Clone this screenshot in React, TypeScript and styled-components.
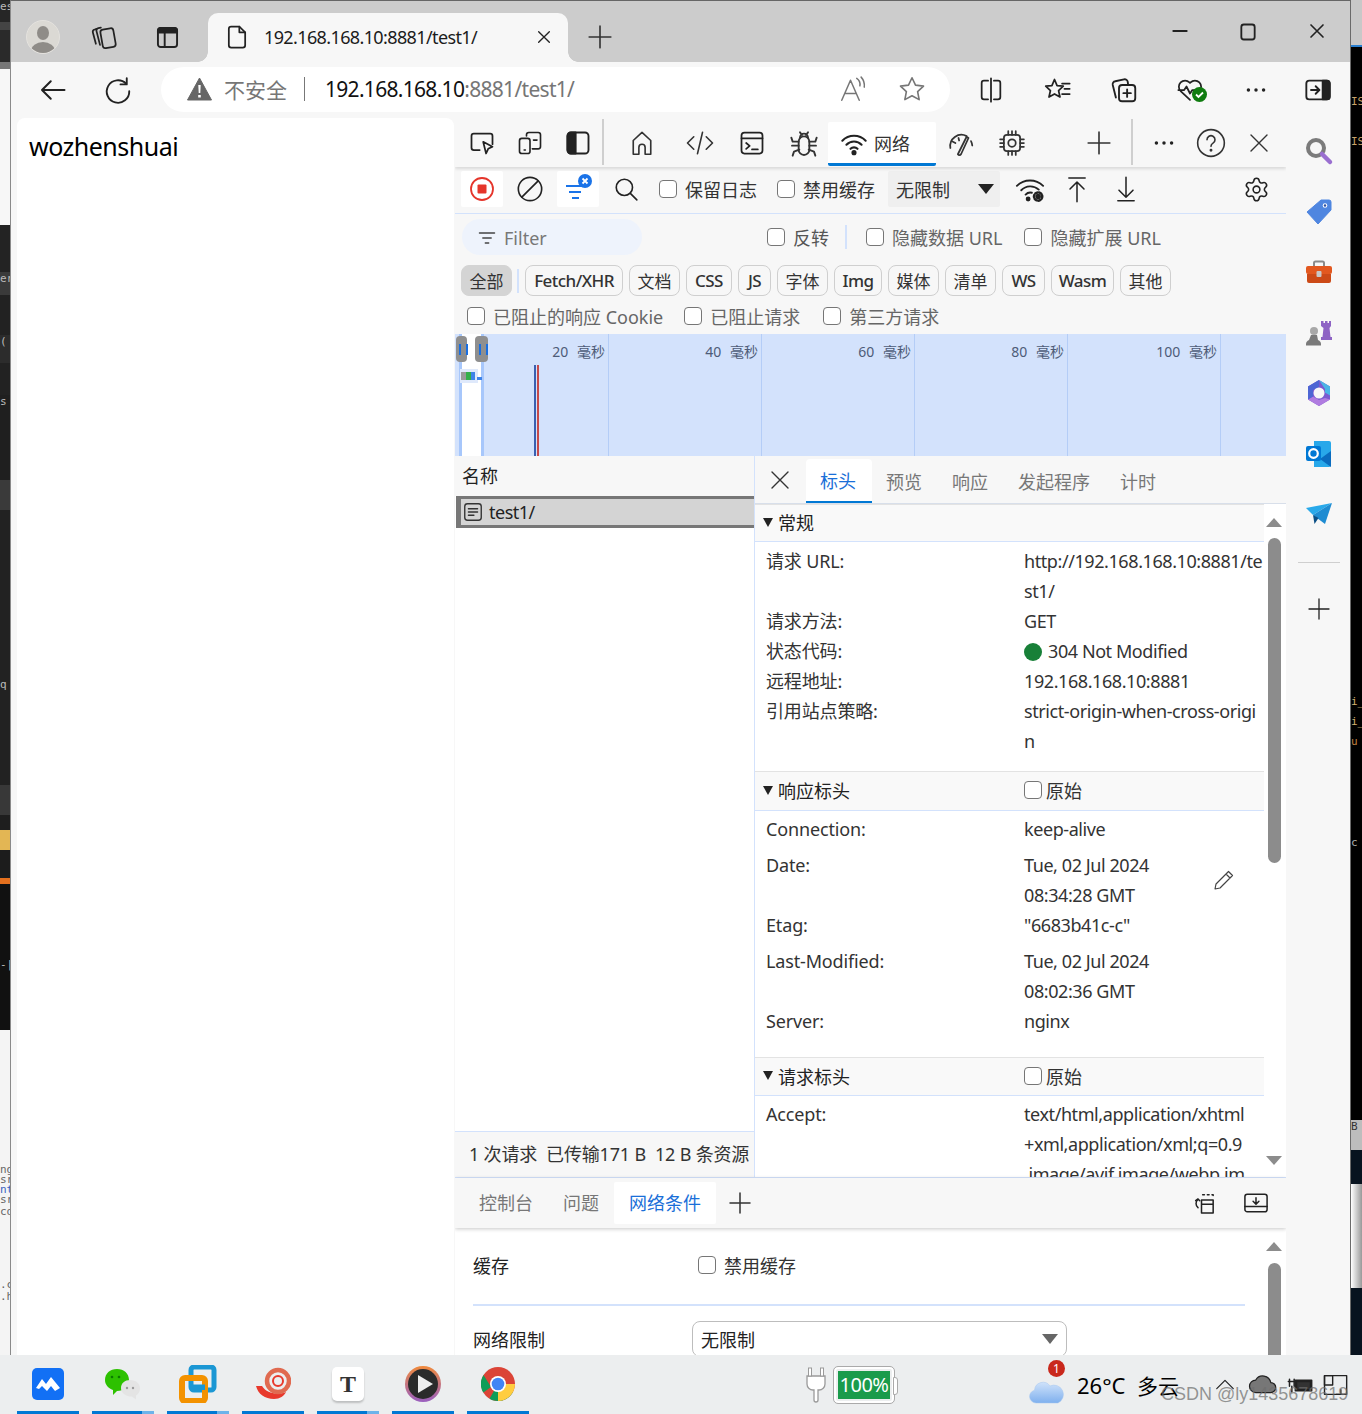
import React from 'react';
import styled, { createGlobalStyle } from 'styled-components';
import { Settings } from 'lucide-react';

const Global = createGlobalStyle`
  html, body { margin: 0; padding: 0; background: #fff; }
  body { font-family: "Noto Sans", "Noto Sans CJK SC", sans-serif; color: #222; }
  * { box-sizing: border-box; }
`;

const Page = styled.div`width: 1362px; height: 1414px; position: relative; overflow: hidden; display: flex; flex-direction: column;`;
const Desktop = styled.div`height: 1355px; display: flex;`;
const EdgeStrip = styled.div<{ $w: number }>`width: ${p => p.$w}px; flex: none; display: flex; flex-direction: column; overflow: hidden;`;
const Seg = styled.div<{ $h: number; $bg: string; $c?: string }>`
  height: ${p => p.$h}px; background: ${p => p.$bg}; color: ${p => p.$c || '#bbb'}; flex: none;
  font: 11px/${p => Math.min(p.$h, 14)}px "DejaVu Sans Mono", monospace; white-space: nowrap; overflow: hidden;
`;
const Window = styled.div`flex: 1; min-width: 0; display: flex; flex-direction: column; border-left: 1px solid #8a8a8a; border-right: 1px solid #6a6a6a; border-top: 1px solid #666; background: #f7f7f7;`;

const Ico = styled.svg<{ $s: number; $c: string; $w: number }>`
  width: ${p => p.$s}px; height: ${p => p.$s}px; fill: none; flex: none; display: block;
  stroke: ${p => p.$c}; stroke-width: ${p => p.$w}; stroke-linecap: round; stroke-linejoin: round;
`;
const I: React.FC<{ s?: number; c?: string; w?: number; children?: React.ReactNode }> = ({ s = 24, c = '#222', w = 1.5, children }) => (
  <Ico viewBox="0 0 24 24" $s={s} $c={c} $w={w}>{children}</Ico>
);

/* Slot: a box centring one icon in a toolbar row */
const Slot = styled.div<{ $w: number; $ml?: number; $top?: number }>`
  width: ${p => p.$w}px; margin-left: ${p => p.$ml || 0}px; flex: none; display: flex; align-items: center; justify-content: center;
  ${p => p.$top !== undefined ? `align-self: flex-start; margin-top: ${p.$top}px;` : ''}
`;

/* ---------- tab bar ---------- */
const TabBar = styled.div`height: 61px; background: #cccccc; display: flex; align-items: center; padding: 11px 0 0 14px; flex: none;`;
const Tab = styled.div`
  width: 360px; height: 49px; margin: 1px 0 0 23px; align-self: flex-start; background: #f7f7f7; border-radius: 10px 10px 0 0;
  display: flex; align-items: center; position: relative; padding-bottom: 1px;
  &::before, &::after { content: ""; position: absolute; bottom: 0; width: 10px; height: 10px; background: radial-gradient(circle at var(--cx) 0, #cccccc 9.5px, #f7f7f7 10px); }
  &::before { left: -10px; --cx: 0; }
  &::after { right: -10px; --cx: 10px; }
`;
const TabTitle = styled.span`font-size: 18px; margin-left: 13px; width: 272px; color: #1c1c1c; letter-spacing: -0.62px; white-space: nowrap;`;
const Avatar = styled.div`width: 34px; height: 34px; border-radius: 50%; background: #dbd9d4; position: relative; overflow: hidden; border: 1px solid #e4e2de;
  &::before { content: ""; position: absolute; left: 10px; top: 5px; width: 12px; height: 14px; border-radius: 50%; background: #8f8c88; }
  &::after { content: ""; position: absolute; left: 4px; top: 21px; width: 24px; height: 18px; border-radius: 50%; background: #8f8c88; }
`;

/* ---------- address toolbar ---------- */
const Toolbar = styled.div`height: 56px; display: flex; align-items: center; padding-left: 26px; flex: none; position: relative;`;
const Address = styled.div`width: 789px; height: 45px; margin: -2px 0 0 28px; background: #fff; border-radius: 23px; display: flex; align-items: center; padding: 0 23px 0 26px;`;
const Insecure = styled.span`font-size: 21px; color: #767676; margin-left: 12px;`;
const AddrSep = styled.span`width: 1px; height: 24px; background: #777; margin: 0 20px 0 17px;`;
const Host = styled.span`font-size: 21px; color: #111; letter-spacing: -0.7px;`;
const Rest = styled.span`font-size: 21px; color: #767676; letter-spacing: -0.7px; flex: 1;`;

/* ---------- content ---------- */
const Content = styled.div`flex: 1; min-height: 0; display: flex; padding-left: 6px;`;
const PagePane = styled.div`width: 437px; flex: none; background: #fff; border-radius: 8px 8px 0 0; padding: 8px 12px; font-size: 25px; line-height: 40px; color: #000; letter-spacing: -0.5px;`;
const Devtools = styled.div`width: 831px; margin-left: 1px; flex: none; display: flex; flex-direction: column; overflow: hidden;`;
const SideBar = styled.div`flex: 1; display: flex; flex-direction: column; align-items: center; padding: 3px 0 0 1px;`;
const SideItem = styled.div`height: 60.5px; width: 100%; display: flex; align-items: center; justify-content: center; flex: none;`;
const SideRule = styled.div`width: 42px; height: 1px; background: #cfcfcf; margin: 17px 0 34px;`;

const ActivityBar = styled.div`height: 49px; flex: none; display: flex; align-items: center; box-shadow: 0 2px 3px rgba(0,0,0,.12); position: relative;`;
const ActSep = styled.div<{ $ml: number }>`width: 2px; height: 46px; background: #cfcfcf; margin-left: ${p => p.$ml}px; margin-top: -2px;`;
const NetTab = styled.div`width: 108px; height: 44px; margin: 3px 0 0 9px; background: #fff; border-bottom: 3px solid #0078d4; border-radius: 2px; display: flex; align-items: center; padding-left: 12px; gap: 6px; font-size: 18px; color: #333;`;

const NetBar = styled.div`height: 47px; flex: none; display: flex; align-items: center; border-bottom: 1px solid #d3e2fc; padding: 0 0 2px 6px;`;
const ToolBtn = styled.div<{ $ml?: number; $white?: boolean }>`
  width: 42px; height: 36px; margin-left: ${p => p.$ml || 0}px; border-radius: 2px; background: ${p => p.$white ? '#fff' : 'transparent'};
  display: flex; align-items: center; justify-content: center; flex: none; position: relative;
`;
const Box = styled.span`width: 18px; height: 18px; border: 1.5px solid #767676; border-radius: 4px; background: #fff; flex: none;`;
const Check = styled.label<{ $ml?: number; $c?: string; $gap?: number }>`
  display: flex; align-items: center; gap: ${p => p.$gap ?? 8}px; font-size: 18px; color: ${p => p.$c || '#333'}; margin-left: ${p => p.$ml || 0}px; white-space: nowrap; flex: none;
`;
const NetSelect = styled.div`width: 112px; height: 36px; background: #efefef; margin-left: 13px; border-radius: 2px; display: flex; align-items: center; justify-content: space-between; padding: 0 6px 0 8px; font-size: 18px; color: #333;`;
const Tri = styled.span<{ $c?: string; $s?: number }>`width: 0; height: 0; border-left: ${p => p.$s || 8}px solid transparent; border-right: ${p => p.$s || 8}px solid transparent; border-top: ${p => (p.$s || 8) + 2}px solid ${p => p.$c || '#222'}; flex: none;`;

const FilterRow = styled.div`height: 46px; flex: none; display: flex; align-items: center; padding-left: 7px;`;
const FilterPill = styled.div`width: 180px; height: 36px; border-radius: 18px; background: #eef3fc; display: flex; align-items: center; padding: 2px 0 0 15px; gap: 7px; color: #777; font-size: 18px;`;
const VSep = styled.span<{ $ml: number; $h: number }>`width: 2px; height: ${p => p.$h}px; background: #d3e2fc; margin-left: ${p => p.$ml}px; flex: none;`;

const ChipRow = styled.div`height: 40px; flex: none; display: flex; align-items: center; gap: 6px; padding: 1px 0 0 6px;`;
const Chip = styled.div<{ $on?: boolean; $w: number; $bold?: boolean }>`
  height: 31px; width: ${p => p.$w}px; flex: none; justify-content: center; border-radius: 8px; border: 1px solid ${p => p.$on ? '#d4d4d4' : '#cfcfcf'}; background: ${p => p.$on ? '#d4d4d4' : 'transparent'};
  font-size: 17px; display: flex; align-items: center; color: #333; font-weight: ${p => p.$bold ? 500 : 400}; white-space: nowrap; letter-spacing: ${p => p.$bold ? '-0.55px' : '0'};
`;
const ChecksRow = styled.div`height: 34px; flex: none; display: flex; align-items: center; padding: 0 0 3px 12px;`;

const Overview = styled.div`height: 122px; flex: none; background: #d3e2fc; position: relative; display: grid; grid-template-columns: repeat(5, 153px); padding-left: 1px;`;
const TickCell = styled.div`border-right: 1px solid #b4cdf7; text-align: right; padding: 9px 3px 0 0; font-size: 14px; line-height: 18px; color: #4e5c78; word-spacing: 5px;`;
const SelWindow = styled.div`position: absolute; left: 4px; top: 0; width: 25px; bottom: 0; background: #fff; border-left: 3px solid #a7c7fb; border-right: 3px solid #a7c7fb;`;
const Handle = styled.div<{ $x: number; $w: number }>`
  position: absolute; left: ${p => p.$x}px; top: 2px; width: ${p => p.$w}px; height: 26px; background: #8f8f8f; border-radius: 4px;
  &::after { content: ""; position: absolute; left: ${p => Math.max(1, p.$w / 2 - 3)}px; top: 8px; width: 5px; height: 11px; border-left: 2px solid #1a6fe0; border-right: 2px solid #1a6fe0; }
`;
const WaterBar = styled.div<{ $x: number; $w: number; $c: string; $y?: number; $h?: number }>`position: absolute; left: ${p => p.$x}px; top: ${p => p.$y ?? 38}px; width: ${p => p.$w}px; height: ${p => p.$h ?? 8}px; background: ${p => p.$c};`;
const Marker = styled.div<{ $x: number; $c: string }>`position: absolute; left: ${p => p.$x}px; top: 31px; bottom: 0; width: 2px; background: ${p => p.$c};`;

const Split = styled.div`flex: 1; min-height: 0; display: flex; border-bottom: 1px solid #d3e2fc;`;
const ListPane = styled.div`width: 300px; flex: none; background: #fff; border-right: 1px solid #d3e2fc; display: flex; flex-direction: column;`;
const ListHead = styled.div`height: 40px; background: #f7f7f7; display: flex; align-items: center; padding: 0 0 2px 7px; font-size: 18px; color: #222;`;
const ListRow = styled.div`height: 32px; margin-left: 1px; background: #d4d4d4; border: solid #777; border-width: 3px 0 3px 5px; display: flex; align-items: center; gap: 5px; padding: 0 0 1px 1px; font-size: 18px; color: #222; letter-spacing: -0.5px;`;
const ListFill = styled.div`flex: 1;`;
const StatusBar = styled.div`height: 46px; background: #f7f7f7; border-top: 1px solid #d3e2fc; display: flex; align-items: center; padding: 0 0 3px 14px; font-size: 18px; color: #333; white-space: pre; letter-spacing: -0.18px; overflow: hidden;`;

const Details = styled.div`flex: 1; min-width: 0; display: flex; flex-direction: column; background: #fff;`;
const DetailTabs = styled.div`height: 48px; flex: none; background: #f7f7f7; border-bottom: 1px solid #d8dfea; display: flex; align-items: center; padding-left: 13px;`;
const DetailTab = styled.div<{ $on?: boolean; $ml?: number }>`
  height: 44px; margin-left: ${p => p.$ml || 0}px; padding: 0 ${p => p.$on ? '16px 0 14px' : '0'}; font-size: 18px; display: flex; align-items: center; align-self: flex-end;
  color: ${p => p.$on ? '#1a6fd8' : '#777'}; background: ${p => p.$on ? '#fff' : 'transparent'}; border-bottom: ${p => p.$on ? '2px solid #0078d4' : '0'}; border-radius: 4px 4px 0 0;
`;
const DetailBody = styled.div`flex: 1; min-height: 0; display: flex; overflow: hidden;`;
const Sections = styled.div`width: 509px; flex: none;`;
const SecHead = styled.div<{ $h: number }>`height: ${p => p.$h}px; display: flex; align-items: center; background: #f9f9f9; border-bottom: 1px solid #d3e2fc; border-top: 1px solid #e3e3e3; padding: 0 0 2px 8px; font-size: 18px; color: #222;`;
const SecTitle = styled.span`margin-left: 5px; width: 246px;`;
const HeadTri = styled(Tri)`border-left-width: 5px; border-right-width: 5px; border-top-width: 9px;`;
const SecRows = styled.div<{ $pt: number; $pb: number }>`padding: ${p => p.$pt}px 0 ${p => p.$pb}px 11px; position: relative;`;
const Row = styled.div<{ $mt?: number }>`display: grid; grid-template-columns: 258px 1fr; margin-top: ${p => p.$mt || 0}px; font-size: 18px; line-height: 30px; color: #333; white-space: nowrap;`;
const RowLabel = styled.span`letter-spacing: -0.15px;`;
const RowValue = styled.span`letter-spacing: -0.42px;`;
const StatusDot = styled.span`display: inline-block; width: 18px; height: 18px; border-radius: 50%; background: #188038; vertical-align: -3px; margin-right: 6px;`;
const Pencil = styled.div`position: absolute; right: 28px; top: 57px;`;

const Scroll = styled.div`flex: 1; display: flex; flex-direction: column; align-items: center; position: relative; background: #fff;`;
const ArrUp = styled.span`width: 0; height: 0; border-left: 8px solid transparent; border-right: 8px solid transparent; border-bottom: 9px solid #8c8c8c; margin-top: 14px; margin-left: -2px; flex: none;`;
const ArrDown = styled.span`width: 0; height: 0; border-left: 8px solid transparent; border-right: 8px solid transparent; border-top: 9px solid #8c8c8c; margin-left: -2px; flex: none;`;
const Thumb = styled.div<{ $h: number; $mt: number; $mb?: number }>`width: 13px; height: ${p => p.$h}px; border-radius: 7px; background: #8c8c8c; margin-top: ${p => p.$mt}px; margin-bottom: ${p => p.$mb || 0}px; margin-left: -2px; flex: none;`;

const DrawerTabs = styled.div`height: 50px; flex: none; background: #f7f7f7; display: flex; align-items: center; padding-left: 24px; box-shadow: 0 1px 4px rgba(0,0,0,.22); position: relative; z-index: 1;`;
const DrawerTab = styled.div<{ $on?: boolean; $ml?: number }>`
  margin-left: ${p => p.$ml || 0}px; font-size: 18px; color: ${p => p.$on ? '#1a6fd8' : '#777'}; height: 42px; display: flex; align-items: center;
  padding: 0 ${p => p.$on ? 15 : 0}px 2px; background: ${p => p.$on ? '#fff' : 'transparent'}; border-radius: 2px;
`;
const DrawerBody = styled.div`height: 127px; flex: none; display: flex; background: #fff; overflow: hidden;`;
const DrawerMain = styled.div`width: 809px; flex: none; padding: 0 19px 0 18px;`;
const CondRow = styled.div<{ $h: number; $pb?: number }>`height: ${p => p.$h}px; padding-bottom: ${p => p.$pb || 0}px; display: grid; grid-template-columns: 219px 1fr; align-items: center; font-size: 18px; color: #222;`;
const CondRule = styled.div`height: 2px; background: #d3e2fc; margin-bottom: 14px;`;
const CondSelect = styled.div`width: 375px; height: 36px; border: 1px solid #bdbdbd; border-radius: 8px; display: flex; align-items: center; justify-content: space-between; padding: 0 8px;`;

/* ---------- taskbar ---------- */
const Taskbar = styled.div`height: 59px; flex: none; background: #eceeef; display: flex; padding-left: 17px; position: relative;`;
const TaskItem = styled.div<{ $split?: boolean }>`
  width: 62px; margin-right: 13px; display: flex; align-items: center; justify-content: center; padding-bottom: 2px; position: relative;
  &::after { content: ""; position: absolute; left: 0; right: 0; bottom: 0; height: 3px;
    background: ${p => p.$split ? 'linear-gradient(90deg, #0078d4 80%, #6db3ea 80%)' : '#0078d4'}; }
`;
const TTile = styled.div`width: 32px; height: 34px; border-radius: 5px; background: #fff; box-shadow: 0 2px 2px rgba(0,0,0,.2); display: flex; align-items: center; justify-content: center; font: 700 24px/1 "Liberation Serif", serif; color: #333;`;
const Tray = styled.div`position: absolute; left: 790px; right: 0; top: 0; bottom: 0; display: flex; align-items: center; overflow: hidden;`;
const Battery = styled.div`
  width: 60px; height: 36px; margin-left: 7px; border: 2px solid #fff; outline: 1px solid #aaa; border-radius: 4px; padding: 2px; flex: none; position: relative;
  &::after { content: ""; position: absolute; right: -6px; top: 8px; width: 3px; height: 16px; background: #fff; border: 1px solid #aaa; border-radius: 0 3px 3px 0; }
`;
const BatteryFill = styled.div`height: 100%; background: #1a9b4b; color: #fff; font-size: 20px; line-height: 27px; text-align: center; letter-spacing: -.5px;`;
const WeatherIcon = styled.div`position: relative; margin: 3px 0 0 135px; flex: none; height: 36px; width: 36px; display: flex; align-items: flex-end;`;
const Badge = styled.div`position: absolute; left: 19px; top: -8px; width: 17px; height: 17px; border-radius: 50%; background: #c9281c; color: #fff; font-size: 12px; line-height: 17px; text-align: center;`;
const Temp = styled.span`font-size: 22px; color: #000; margin-left: 12px; white-space: nowrap; width: 60px; flex: none;`;
const Cloudy = styled.span`font-size: 21px; color: #000; white-space: nowrap; width: 66px; flex: none;`;
const TrayEnd = styled.div`width: 6px; height: 12px; border: 1px solid #222; margin-left: 24px; flex: none;`;
const Watermark = styled.div`position: absolute; left: 1161px; top: 27px; font: 18px/24px "Liberation Sans", sans-serif; color: rgba(110,110,110,.72); white-space: nowrap;`;
const HeartWrap = styled.div`position: relative;`;
const HeartBadge = styled.div`position: absolute; right: -3px; bottom: -3px;`;

/* ---------- icons ---------- */
const X = ({ s = 20, w = 1.6, c = '#222' }) => <I s={s} w={w} c={c}><path d="M4 4l16 16M20 4L4 20" /></I>;
const Plus = ({ s = 26, w = 1.5, c = '#333' }) => <I s={s} w={w} c={c}><path d="M12 2v20M2 12h20" /></I>;
const Wifi = ({ s = 28 }) => <I s={s} w={1.8}><path d="M2 10a14 14 0 0 1 20 0M5.500 13.500a9 9 0 0 1 13 0M9 17a4.200 4.200 0 0 1 6 0" /><circle cx="12" cy="20.300" r="1.300" fill="#222" /></I>;
const Doc = () => <I s={28} w={1.5}><path d="M7 3h7l5 5v11a2 2 0 0 1-2 2H7a2 2 0 0 1-2-2V5a2 2 0 0 1 2-2z" /><path d="M14 3v5h5" /></I>;
const Copies = () => <I s={30} w={1.4}><rect x="10" y="5.500" width="10.500" height="15" rx="2.200" transform="rotate(-10 15 13)" /><path d="M9.500 4.500l-2 .4a2 2 0 0 0-1.500 2.400l2.800 11M6 5.500l-1.500.5a2 2 0 0 0-1.400 2.400l2.400 9" /></I>;
const VTabs = () => <I s={27} w={1.7}><rect x="3.500" y="3.500" width="17" height="17" rx="2.500" /><path d="M3.500 7.500V6a2.500 2.500 0 0 1 2.500-2.500h12a2.500 2.500 0 0 1 2.500 2.500v1.500z" fill="#222" /><path d="M9.500 7.500v13" /></I>;
const Dot3 = ({ s = 26 }) => <I s={s}><circle cx="5" cy="12" r="1.600" fill="#222" stroke="none" /><circle cx="12" cy="12" r="1.600" fill="#222" stroke="none" /><circle cx="19" cy="12" r="1.600" fill="#222" stroke="none" /></I>;

export default function App() {
  return (
    <Page>
      <Global />
      <Desktop>
        <EdgeStrip $w={10}>
          <Seg $h={22} $bg="#262626">es</Seg>
          <Seg $h={8} $bg="#444" />
          <Seg $h={32} $bg="#2a2a2a" />
          <Seg $h={7} $bg="#777" />
          <Seg $h={156} $bg="#f7f7f7" />
          <Seg $h={47} $bg="#232323" />
          <Seg $h={23} $bg="#3a3a3a">er</Seg>
          <Seg $h={40} $bg="#222" />
          <Seg $h={28} $bg="#2c2c2c">(</Seg>
          <Seg $h={32} $bg="#222" />
          <Seg $h={85} $bg="#1f1f1f">s</Seg>
          <Seg $h={30} $bg="#3a3a3a" />
          <Seg $h={168} $bg="#222" />
          <Seg $h={107} $bg="#222">q</Seg>
          <Seg $h={30} $bg="#383838" />
          <Seg $h={15} $bg="#1e1e1e" />
          <Seg $h={20} $bg="#e3b654" />
          <Seg $h={28} $bg="#1c1c1c" />
          <Seg $h={6} $bg="#e4701e" />
          <Seg $h={74} $bg="#111" />
          <Seg $h={72} $bg="#111">-|</Seg>
          <Seg $h={135} $bg="#f4f4f4" />
          <Seg $h={10} $bg="#f4f4f4" $c="#666">ng:</Seg>
          <Seg $h={10} $bg="#f4f4f4" $c="#666">sr</Seg>
          <Seg $h={10} $bg="#f4f4f4" $c="#3a5fc0">nt</Seg>
          <Seg $h={10} $bg="#f4f4f4" $c="#666">sr</Seg>
          <Seg $h={75} $bg="#f4f4f4" $c="#666">co</Seg>
          <Seg $h={10} $bg="#f4f4f4" $c="#666">.c</Seg>
          <Seg $h={65} $bg="#f4f4f4" $c="#666">.h</Seg>
        </EdgeStrip>
        <Window>
          <TabBar>
            <Slot $w={36}><Avatar /></Slot>
            <Slot $w={36} $ml={25}><Copies /></Slot>
            <Slot $w={36} $ml={27}><VTabs /></Slot>
            <Tab>
              <Slot $w={28} $ml={15}><Doc /></Slot>
              <TabTitle>192.168.168.10:8881/test1/</TabTitle>
              <X s={16} w={2} />
            </Tab>
            <Slot $w={26} $ml={19}><Plus /></Slot>
            <Slot $w={22} $ml={556} $top={10}><I s={18} w={2.400}><path d="M3 12h18" /></I></Slot>
            <Slot $w={22} $ml={46} $top={10}><I s={20} w={2.200}><rect x="4" y="3" width="16" height="18" rx="3" /></I></Slot>
            <Slot $w={22} $ml={47} $top={10}><X s={18} w={2.200} /></Slot>
          </TabBar>
          <Toolbar>
            <Slot $w={30}><I s={30} w={1.600}><path d="M4 12h18M11 5l-7 7 7 7" /></I></Slot>
            <Slot $w={30} $ml={36}><I s={30} w={1.500}><path d="M18.500 7A9 9 0 1 0 21 13" /><path d="M19 2.500V7.500H14" /></I></Slot>
            <Address>
              <svg width="25" height="24" viewBox="0 0 25 24"><path d="M12.500 1L24.500 23H.5z" fill="#666" stroke="#666" strokeLinejoin="round" /><path d="M11.300 8h2.400l-.4 8h-1.600zM11.200 18h2.600v2.600h-2.600z" fill="#fff" /></svg>
              <Insecure>不安全</Insecure>
              <AddrSep />
              <Host>192.168.168.10</Host>
              <Rest>:8881/test1/</Rest>
              <Slot $w={30}>
                <I s={30} c="#767676" w={1.200}><path d="M3 21L10 5l7 16M5.500 15.500h9M15 3.500a6 6 0 0 1 2.500 6M18.500 2.500a10 10 0 0 1 2.500 8" /></I>
              </Slot>
              <Slot $w={30} $ml={29}>
                <I s={30} c="#767676" w={1.300}><path d="M12 3l2.800 5.900 6.400.8-4.700 4.400 1.200 6.400L12 17.400l-5.700 3.100 1.200-6.400L2.800 9.700l6.400-.8z" /></I>
              </Slot>
            </Address>
            <Slot $w={30} $ml={26}><I s={28} w={1.500}><path d="M9.500 4H6a2 2 0 0 0-2 2v12a2 2 0 0 0 2 2h3.500M14.500 4H18a2 2 0 0 1 2 2v12a2 2 0 0 1-2 2h-3.500M12 2v20" /></I></Slot>
            <Slot $w={30} $ml={37}><I s={28} w={1.500}><path d="M9 3l2.200 5.200 5.300.5-4 3.800 1.200 5.500L9 15.400 4.300 18l1.200-5.500-4-3.800 5.300-.5zM15.500 6.500H22M17.500 11H22M15.500 15.500H22" /></I></Slot>
            <Slot $w={30} $ml={36}><I s={30} w={1.500}><rect x="8" y="8" width="13" height="13" rx="2.500" /><path d="M14.500 11.500v6M11.500 14.500h6M5.500 18L3 8a2.500 2.500 0 0 1 2-3l7-1.500a2.500 2.500 0 0 1 3 2L15.300 8" /></I></Slot>
            <Slot $w={30} $ml={36}>
              <HeartWrap>
                <I s={28} w={1.500}><path d="M12 20.500L4 13a5.300 5.300 0 0 1 0-7.500 5.300 5.300 0 0 1 7.500 0l.5.500.5-.5a5.300 5.300 0 0 1 7.500 0 5.300 5.300 0 0 1 0 7.500M2 12h5l2-3 3 6 2-3h3" /></I>
                <HeartBadge><svg width="15" height="15" viewBox="0 0 15 15"><circle cx="7.500" cy="7.500" r="7.500" fill="#107c10" /><path d="M4 7.500l2.500 2.500 4.500-4.500" fill="none" stroke="#fff" strokeWidth="1.800" /></svg></HeartBadge>
              </HeartWrap>
            </Slot>
            <Slot $w={30} $ml={36}><Dot3 /></Slot>
            <Slot $w={30} $ml={32}>
              <I s={28} w={1.600}><rect x="2" y="4" width="20" height="16" rx="2.500" /><path d="M16 4h3.500A2.500 2.500 0 0 1 22 6.500v11a2.500 2.500 0 0 1-2.500 2.500H16z" fill="#222" /><path d="M6 12h7M10 8.800l3.200 3.200-3.200 3.200" /></I>
            </Slot>
          </Toolbar>
          <Content>
            <PagePane>wozhenshuai</PagePane>
            <Devtools>
              <ActivityBar>
                <Slot $w={30} $ml={12}><I s={28} w={1.500}><path d="M10 18H5a2 2 0 0 1-2-2V6a2 2 0 0 1 2-2h14a2 2 0 0 1 2 2v7" /><path d="M13 11l2.500 10 1.800-4 3.700-1.800z" /></I></Slot>
                <Slot $w={30} $ml={18}><I s={28} w={1.400}><path d="M9 6V5a2 2 0 0 1 2-2h8a2 2 0 0 1 2 2v10a2 2 0 0 1-2 2h-5" /><rect x="3" y="8" width="9" height="13" rx="2" /><path d="M7 18h1M15 9.500h3" /></I></Slot>
                <Slot $w={30} $ml={18}><I s={28} w={1.600}><rect x="3" y="3" width="18" height="18" rx="3" /><path d="M6 3h4v18H6a3 3 0 0 1-3-3V6a3 3 0 0 1 3-3z" fill="#222" /></I></Slot>
                <ActSep $ml={9} />
                <Slot $w={30} $ml={23}><I s={30} c="#333" w={1.300}><path d="M5 21V10l7-6.500L19 10v11h-4.500v-5.500a2.500 2.500 0 0 0-5 0V21z" /></I></Slot>
                <Slot $w={30} $ml={28}><I s={30} c="#333" w={1.300}><path d="M7 7l-5 5 5 5M17 7l5 5-5 5M14 3.500l-4 17" /></I></Slot>
                <Slot $w={30} $ml={22}><I s={28} c="#222" w={1.500}><rect x="3" y="3" width="18" height="18" rx="2.500" /><path d="M3 8h18M7 12l3 2.500L7 17M12 17.500h5" /></I></Slot>
                <Slot $w={30} $ml={22}><I s={32} c="#333" w={1.400}><rect x="8" y="7" width="8" height="14" rx="4" /><path d="M9 8a3 3 0 0 1 6 0M9 4l1.500 2M15 4l-1.500 2M8 11H3.500L2.500 8M16 11h4.500l1-3M8 14H3M16 14h5M8.500 17l-4 1.500-1 3M15.500 17l4 1.500 1 3" /></I></Slot>
                <NetTab><Wifi /><span>网络</span></NetTab>
                <Slot $w={30} $ml={10}><I s={30} c="#333" w={1.400}><path d="M3.500 16a9 9 0 0 1 13-9.500M21 14a9 9 0 0 0-1-3.500M5.500 11l2 1M10 8l.5 2M9.500 21l7-14 1.500 1-6 13a1.500 1.500 0 0 1-2.500 0z" /></I></Slot>
                <Slot $w={30} $ml={21}><I s={30} c="#333" w={1.400}><rect x="5.500" y="5.500" width="13" height="13" rx="2.500" /><circle cx="12" cy="12" r="3" /><path d="M9 5.500V2.500M12 5.500V2.500M15 5.500V2.500M9 18.500v3M12 18.500v3M15 18.500v3M5.500 9h-3M5.500 12h-3M5.500 15h-3M18.500 9h3M18.500 12h3M18.500 15h3" /></I></Slot>
                <Slot $w={26} $ml={59}><Plus s={26} w={1.500} /></Slot>
                <ActSep $ml={19} />
                <Slot $w={26} $ml={18}><Dot3 /></Slot>
                <Slot $w={30} $ml={19}><I s={32} c="#333" w={1.200}><circle cx="12" cy="12" r="10" /><path d="M9 9.500a3 3 0 1 1 4.500 2.600c-1 .6-1.500 1.200-1.500 2.400" /><circle cx="12" cy="17.500" r=".5" fill="#333" /></I></Slot>
                <Slot $w={26} $ml={20}><X s={24} w={1.400} c="#333" /></Slot>
              </ActivityBar>
              <NetBar>
                <ToolBtn $white>
                  <svg width="26" height="26" viewBox="0 0 26 26"><circle cx="13" cy="13" r="11" fill="none" stroke="#e5352b" strokeWidth="1.800" /><rect x="8.500" y="8.500" width="9" height="9" rx="1" fill="#e5352b" /></svg>
                </ToolBtn>
                <ToolBtn $ml={6}><I s={28} w={1.400}><circle cx="12" cy="12" r="10" /><path d="M5 19L19 5" /></I></ToolBtn>
                <ToolBtn $ml={6} $white>
                  <svg width="30" height="30" viewBox="0 0 30 30"><path d="M3 12h16M6 18h12M9 24h7" stroke="#1a73e8" strokeWidth="1.800" fill="none" /><circle cx="22" cy="7" r="7" fill="#1a73e8" /><path d="M19.500 4.500l5 5M24.500 4.500l-5 5" stroke="#fff" strokeWidth="1.800" /></svg>
                </ToolBtn>
                <Slot $w={26} $ml={14}><I s={26} w={1.500}><circle cx="10.500" cy="10.500" r="7.500" /><path d="M16 16l6 6" /></I></Slot>
                <Check $ml={20}><Box />保留日志</Check>
                <Check $ml={20}><Box />禁用缓存</Check>
                <NetSelect><span>无限制</span><Tri /></NetSelect>
                <Slot $w={30} $ml={15}>
                  <I s={30} w={1.500}><path d="M1.500 9.500a15 15 0 0 1 21 0M5 13a10 10 0 0 1 14-.5M8.500 16.500a5 5 0 0 1 5-1.500" /><circle cx="10.500" cy="20" r="1.200" fill="#222" /><circle cx="18.500" cy="18" r="1.500" fill="#222" /><circle cx="18.500" cy="18" r="3.300" strokeDasharray="2 1.200" strokeWidth="2" /></I>
                </Slot>
                <Slot $w={28} $ml={18}><I s={28} w={1.300}><path d="M5 2.500h14M12 23V6M6 12l6-6 6 6" /></I></Slot>
                <Slot $w={28} $ml={21}><I s={28} w={1.300}><path d="M5 22h14M12 2v17M6 13l6 6 6-6" /></I></Slot>
                <Slot $w={30} $ml={101}><Settings size={27} strokeWidth={1.400} color="#222" /></Slot>
              </NetBar>
              <FilterRow>
                <FilterPill>
                  <I s={20} w={1.800} c="#444"><path d="M3 6h18M7 12h10M10 18h4" /></I>
                  Filter
                </FilterPill>
                <Check $ml={125} $c="#555"><Box />反转</Check>
                <VSep $ml={16} $h={24} />
                <Check $ml={19} $c="#666"><Box />隐藏数据 URL</Check>
                <Check $ml={22} $c="#666"><Box />隐藏扩展 URL</Check>
              </FilterRow>
              <ChipRow>
                <Chip $on $w={51}>全部</Chip>
                <VSep $ml={-1} $h={24} />
                <Chip $w={98} $bold>Fetch/XHR</Chip>
                <Chip $w={51}>文档</Chip>
                <Chip $w={46} $bold>CSS</Chip>
                <Chip $w={33} $bold>JS</Chip>
                <Chip $w={51}>字体</Chip>
                <Chip $w={48} $bold>Img</Chip>
                <Chip $w={51}>媒体</Chip>
                <Chip $w={51}>清单</Chip>
                <Chip $w={43} $bold>WS</Chip>
                <Chip $w={63} $bold>Wasm</Chip>
                <Chip $w={51}>其他</Chip>
              </ChipRow>
              <ChecksRow>
                <Check $c="#666"><Box />已阻止的响应 Cookie</Check>
                <Check $ml={21} $c="#666"><Box />已阻止请求</Check>
                <Check $ml={23} $c="#666"><Box />第三方请求</Check>
              </ChecksRow>
              <Overview>
                <TickCell>20 毫秒</TickCell>
                <TickCell>40 毫秒</TickCell>
                <TickCell>60 毫秒</TickCell>
                <TickCell>80 毫秒</TickCell>
                <TickCell>100 毫秒</TickCell>
                <SelWindow />
                <Handle $x={1} $w={11} />
                <Handle $x={20} $w={13} />
                <WaterBar $x={5} $w={18} $c="#dfe9fb" $y={35} $h={14} />
                <WaterBar $x={6} $w={5} $c="#9a9a9a" />
                <WaterBar $x={11} $w={5} $c="#34b04a" />
                <WaterBar $x={16} $w={4} $c="#3f83e8" />
                <WaterBar $x={22} $w={5} $c="#3f83e8" $y={43} $h={3} />
                <Marker $x={79} $c="#3b5fb0" />
                <Marker $x={82} $c="#c74a4a" />
              </Overview>
              <Split>
                <ListPane>
                  <ListHead>名称</ListHead>
                  <ListRow>
                    <I s={22} w={1.500} c="#333"><rect x="3" y="3" width="18" height="18" rx="3" /><path d="M7 8.500h10M7 12h10M7 15.500h6" /></I>
                    test1/
                  </ListRow>
                  <ListFill />
                  <StatusBar>{'1 次请求  已传输171 B  12 B 条资源'}</StatusBar>
                </ListPane>
                <Details>
                  <DetailTabs>
                    <X s={24} w={1.400} c="#333" />
                    <DetailTab $on $ml={14}>标头</DetailTab>
                    <DetailTab $ml={14}>预览</DetailTab>
                    <DetailTab $ml={30}>响应</DetailTab>
                    <DetailTab $ml={30}>发起程序</DetailTab>
                    <DetailTab $ml={30}>计时</DetailTab>
                  </DetailTabs>
                  <DetailBody>
                    <Sections>
                      <SecHead $h={38}><HeadTri /><SecTitle>常规</SecTitle></SecHead>
                      <SecRows $pt={4} $pb={15}>
                        <Row><RowLabel>请求 URL:</RowLabel><RowValue>http://192.168.168.10:8881/te<br />st1/</RowValue></Row>
                        <Row><RowLabel>请求方法:</RowLabel><RowValue>GET</RowValue></Row>
                        <Row><RowLabel>状态代码:</RowLabel><RowValue><StatusDot />304 Not Modified</RowValue></Row>
                        <Row><RowLabel>远程地址:</RowLabel><RowValue>192.168.168.10:8881</RowValue></Row>
                        <Row><RowLabel>引用站点策略:</RowLabel><RowValue>strict-origin-when-cross-origi<br />n</RowValue></Row>
                      </SecRows>
                      <SecHead $h={40}><HeadTri /><SecTitle>响应标头</SecTitle><Check $gap={4}><Box />原始</Check></SecHead>
                      <SecRows $pt={3} $pb={21}>
                        <Pencil><I s={24} w={1.200} c="#444"><path d="M16.500 3.500l4 4L8 20l-5 1 1-5zM14 6l4 4" /></I></Pencil>
                        <Row><RowLabel>Connection:</RowLabel><RowValue>keep-alive</RowValue></Row>
                        <Row $mt={6}><RowLabel>Date:</RowLabel><RowValue>Tue, 02 Jul 2024<br />08:34:28 GMT</RowValue></Row>
                        <Row><RowLabel>Etag:</RowLabel><RowValue>"6683b41c-c"</RowValue></Row>
                        <Row $mt={6}><RowLabel>Last-Modified:</RowLabel><RowValue>Tue, 02 Jul 2024<br />08:02:36 GMT</RowValue></Row>
                        <Row><RowLabel>Server:</RowLabel><RowValue>nginx</RowValue></Row>
                      </SecRows>
                      <SecHead $h={39}><HeadTri /><SecTitle>请求标头</SecTitle><Check $gap={4}><Box />原始</Check></SecHead>
                      <SecRows $pt={3} $pb={0}>
                        <Row><RowLabel>Accept:</RowLabel><RowValue>text/html,application/xhtml<br />+xml,application/xml;q=0.9<br />,image/avif,image/webp,im</RowValue></Row>
                      </SecRows>
                    </Sections>
                    <Scroll>
                      <ArrUp />
                      <Thumb $h={325} $mt={11} $mb={293} />
                      <ArrDown />
                    </Scroll>
                  </DetailBody>
                </Details>
              </Split>
              <DrawerTabs>
                <DrawerTab>控制台</DrawerTab>
                <DrawerTab $ml={30}>问题</DrawerTab>
                <DrawerTab $on $ml={15}>网络条件</DrawerTab>
                <Slot $w={24} $ml={12}><Plus s={24} w={1.500} /></Slot>
                <Slot $w={28} $ml={439}><I s={28} w={1.300}><path d="M9 9.500h10v11H9zM9 13h10" /><path d="M10 5h1.500M14 5h1.500M18 5h1v2" strokeDasharray="1.500 1.500" /><path d="M6 9a4.500 4.500 0 0 0 0 7" /><path d="M4 10l2-1.500L7.500 10" /></I></Slot>
                <Slot $w={34} $ml={20}><I s={28} w={1.300}><rect x="2.500" y="4.500" width="19" height="15" rx="2" /><path d="M2.500 15h19M12 7.500v5M9.500 10.500l2.500 2.500 2.500-2.500" /></I></Slot>
              </DrawerTabs>
              <DrawerBody>
                <DrawerMain>
                  <CondRow $h={76} $pb={2}>
                    <span>缓存</span>
                    <Check $ml={6}><Box />禁用缓存</Check>
                  </CondRow>
                  <CondRule />
                  <CondRow $h={38}>
                    <span>网络限制</span>
                    <CondSelect><span>无限制</span><Tri $c="#666" $s={8} /></CondSelect>
                  </CondRow>
                </DrawerMain>
                <Scroll>
                  <ArrUp />
                  <Thumb $h={100} $mt={12} />
                </Scroll>
              </DrawerBody>
            </Devtools>
            <SideBar>
              <SideItem><svg width="30" height="30" viewBox="0 0 30 30"><circle cx="12" cy="12" r="8" fill="none" stroke="#7b7b7b" strokeWidth="4" /><path d="M18 18l8 8" stroke="#9a6fd0" strokeWidth="4.500" strokeLinecap="round" /></svg></SideItem>
              <SideItem><svg width="28" height="28" viewBox="0 0 28 28"><path d="M16 2h8a2 2 0 0 1 2 2v8L13 26 2 14z" fill="#4f86e0" stroke="#4f86e0" strokeLinejoin="round" /><circle cx="20" cy="7.500" r="2.300" fill="#fff" /><circle cx="20" cy="7.500" r="1.200" fill="#2c4fa0" /></svg></SideItem>
              <SideItem><svg width="28" height="24" viewBox="0 0 28 24"><path d="M9 6V3a1.500 1.500 0 0 1 1.500-1.500h7A1.500 1.500 0 0 1 19 3v3" fill="none" stroke="#8a8a8a" strokeWidth="2" /><rect x="1" y="6" width="26" height="8" rx="2" fill="#e2581f" /><path d="M2 14h24v7a2 2 0 0 1-2 2H4a2 2 0 0 1-2-2z" fill="#cc4a17" /><rect x="11.500" y="11" width="5" height="6" rx="1" fill="#c8c8c8" /></svg></SideItem>
              <SideItem><svg width="28" height="28" viewBox="0 0 28 28"><path d="M16 2h2.500v2H20V2h2.500v2H24V2h2v5l-1.500 2 1 9H27v3H16v-3h1.500l1-9L16 7z" fill="#8e63c4" /><circle cx="9" cy="12" r="4" fill="#a8a8a8" /><path d="M6 16h6l1 5c2 1 3 2 3 4v1.500H1V25c0-2 1-3 3-4z" fill="#7a7a7a" /></svg></SideItem>
              <SideItem><svg width="26" height="28" viewBox="0 0 26 28"><path d="M13 1l11 6.500v13L13 27 2 20.500v-13z" fill="#7a5ad0" /><path d="M13 1l11 6.500v9l-5-3V10z" fill="#4ab4e6" /><path d="M2 20.500l5-3 6 3.500 6-2 5 1.500L13 27z" fill="#b07ce0" /><path d="M2 7.500L13 1v7L7 11v6.500l-5 3z" fill="#4d66d4" /><circle cx="13" cy="14" r="5.500" fill="#f7f7f7" /></svg></SideItem>
              <SideItem><svg width="28" height="28" viewBox="0 0 28 28"><path d="M9 1h15a2 2 0 0 1 2 2v22a2 2 0 0 1-2 2H9z" fill="#28a8ea" /><path d="M26 11L15 19l11 8z" fill="#0a6cbf" /><rect x="1" y="6" width="15" height="15" rx="2" fill="#0078d4" /><circle cx="8.500" cy="13.500" r="4.300" fill="none" stroke="#fff" strokeWidth="2.200" /></svg></SideItem>
              <SideItem><svg width="28" height="22" viewBox="0 0 28 22"><path d="M1 5L27 0 8 12z" fill="#29a9ea" /><path d="M27 0L20 21l-12-9z" fill="#1e8cd2" /><path d="M8 12l1.500 9 4-6z" fill="#0b4f85" /></svg></SideItem>
              <SideRule />
              <Plus s={24} w={1.300} c="#222" />
            </SideBar>
          </Content>
        </Window>
        <EdgeStrip $w={11}>
          <Seg $h={45} $bg="#c8c8c8" />
          <Seg $h={2} $bg="#2a7fd0" />
          <Seg $h={48} $bg="#000" />
          <Seg $h={40} $bg="#000" $c="#c8a46a">IS</Seg>
          <Seg $h={560} $bg="#000" $c="#c8a46a">IS</Seg>
          <Seg $h={20} $bg="#000" $c="#d0b070">i_</Seg>
          <Seg $h={20} $bg="#000" $c="#d0b070">i_</Seg>
          <Seg $h={101} $bg="#000" $c="#c08040">u</Seg>
          <Seg $h={284} $bg="#000" $c="#aaa">c</Seg>
          <Seg $h={30} $bg="#bdbdbd" $c="#333">B</Seg>
          <Seg $h={34} $bg="#08131f" />
          <Seg $h={104} $bg="linear-gradient(90deg,#fff,#999)" />
          <Seg $h={67} $bg="#08131f" />
        </EdgeStrip>
      </Desktop>
      <Taskbar>
        <TaskItem>
          <svg width="32" height="32" viewBox="0 0 32 32"><rect width="32" height="32" rx="5" fill="#1270f5" /><path d="M4 20l6-9 4 5 5-7 9 11-5 3-4-5-4 5-5-5-3 3z" fill="#fff" /></svg>
        </TaskItem>
        <TaskItem $split>
          <svg width="38" height="34" viewBox="0 0 38 34"><path d="M13 2c7 0 12 4.500 12 11s-5 11-12 11l-4 4v-5C4 21 1 17.500 1 13 1 6.500 6 2 13 2z" fill="#2dc100" /><path d="M26 13c6 0 10 3.500 10 8.500 0 3-1.500 5.500-4 7v4l-4-3c-6 0-11-3.200-11-8.300C17 16 21 13 26 13z" fill="#e4e4e4" /><circle cx="8" cy="10" r="1.300" fill="#0b7b00" /><circle cx="15" cy="10" r="1.300" fill="#0b7b00" /><circle cx="23" cy="21" r="1.200" fill="#999" /><circle cx="29" cy="21" r="1.200" fill="#999" /></svg>
        </TaskItem>
        <TaskItem $split>
          <svg width="38" height="38" viewBox="0 0 38 38"><rect x="12" y="2" width="23" height="23" rx="3" fill="none" stroke="#1b97d4" strokeWidth="5" /><rect x="3" y="13" width="23" height="23" rx="3" fill="none" stroke="#f39200" strokeWidth="6" /><rect x="12" y="19.500" width="14" height="5.500" fill="#1b97d4" /></svg>
        </TaskItem>
        <TaskItem>
          <svg width="36" height="34" viewBox="0 0 36 34"><path d="M1 19c2 8 9 13 18 13 6 0 10-3 12-7-8 3-19 2-24-6z" fill="#e8392c" /><circle cx="23" cy="14" r="11" fill="none" stroke="#e06a50" strokeWidth="4.500" /><circle cx="23" cy="14" r="5" fill="none" stroke="#e8392c" strokeWidth="2" /></svg>
        </TaskItem>
        <TaskItem $split><TTile>T</TTile></TaskItem>
        <TaskItem>
          <svg width="36" height="36" viewBox="0 0 36 36"><defs><linearGradient id="ring" x1="0" y1="0" x2="0" y2="1"><stop offset="0" stopColor="#f08a3c" /><stop offset="1" stopColor="#9a5fc0" /></linearGradient></defs><circle cx="18" cy="18" r="18" fill="url(#ring)" /><circle cx="18" cy="18" r="15" fill="#2b2b2b" /><path d="M13 9l15 9-15 9z" fill="#eee" /></svg>
        </TaskItem>
        <TaskItem>
          <svg width="34" height="34" viewBox="0 0 34 34"><circle cx="17" cy="17" r="17" fill="#db4437" /><path d="M17 17L31.700 25.500A17 17 0 0 1 8.500 31.700z" fill="#0f9d58" /><path d="M17 17h17A17 17 0 0 1 17 34z" fill="#ffcd40" /><path d="M2.300 25.500A17 17 0 0 1 2.500 8L10 20z" fill="#0f9d58" /><circle cx="17" cy="17" r="8" fill="#fff" /><circle cx="17" cy="17" r="6.300" fill="#4285f4" /></svg>
        </TaskItem>
        <Tray>
          <Slot $w={22} $ml={15}>
            <svg width="22" height="36" viewBox="0 0 22 36"><path d="M2 9h18v8a6 6 0 0 1-6 6h-1v10a2 2 0 0 1-4 0V23H8a6 6 0 0 1-6-6z" fill="#fff" stroke="#9a9a9a" strokeWidth="1.300" /><rect x="3.500" y="1" width="3" height="8" fill="#fff" stroke="#9a9a9a" /><rect x="15.500" y="1" width="3" height="8" fill="#fff" stroke="#9a9a9a" /></svg>
          </Slot>
          <Battery><BatteryFill>100%</BatteryFill></Battery>
          <WeatherIcon>
            <svg width="36" height="26" viewBox="0 0 36 26"><defs><linearGradient id="cl" x1="0" y1="0" x2="0" y2="1"><stop offset="0" stopColor="#cfe2fa" /><stop offset="1" stopColor="#7fb0ee" /></linearGradient></defs><path d="M7 25a6.500 6.500 0 0 1-1.500-12.800A8.500 8.500 0 0 1 21 8a7.500 7.500 0 0 1 8 17z" fill="url(#cl)" stroke="#a7c7ef" strokeWidth=".5" /></svg>
            <Badge>1</Badge>
          </WeatherIcon>
          <Temp>26°C</Temp>
          <Cloudy>多云</Cloudy>
          <Slot $w={22} $ml={11}><I s={22} w={1.300}><path d="M3 16l9-9 9 9" /></I></Slot>
          <Slot $w={30} $ml={11}><I s={30} w={0}><path d="M7 18a5 5 0 0 1 0-10 6.500 6.500 0 0 1 12 2 4 4 0 0 1 0 8z" fill="#777" stroke="#222" strokeWidth="1" /></I></Slot>
          <Slot $w={28} $ml={9}><I s={28} w={1.300}><path d="M3 7v6M7 7v6M2 9h6M5 13v5" /><rect x="9" y="9" width="12" height="7" fill="#333" /><path d="M8 8h14v9H8z" /></I></Slot>
          <Slot $w={28} $ml={7}><I s={28} w={1.200}><rect x="3" y="4" width="19" height="16" /><rect x="3" y="4" width="7" height="8" /><path d="M13 20h8M17 16v4" /></I></Slot>
          <TrayEnd />
        </Tray>
        <Watermark>CSDN @ly1435678619</Watermark>
      </Taskbar>
    </Page>
  );
}
